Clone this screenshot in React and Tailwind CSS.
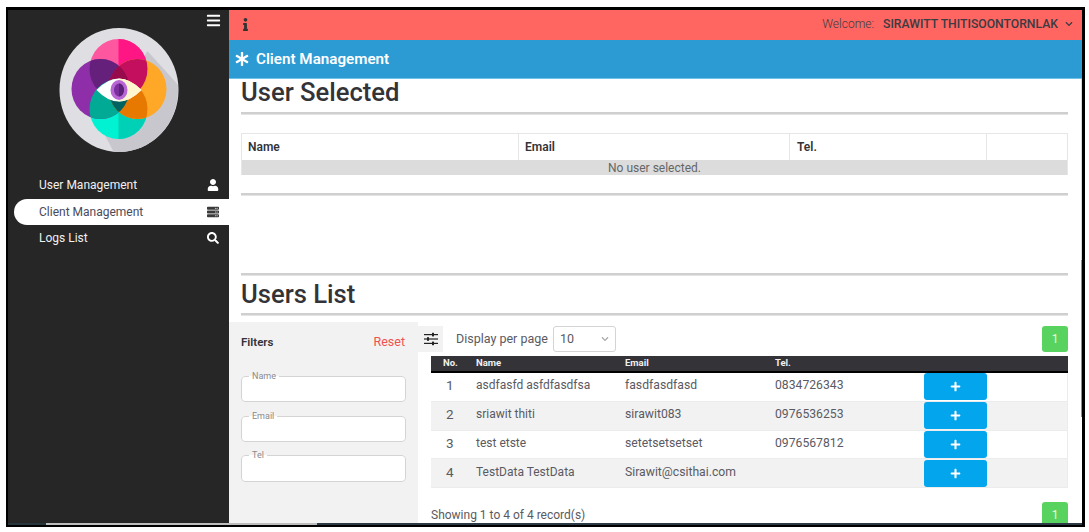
import { FaAsterisk, FaBars, FaChevronDown, FaInfo, FaPlus, FaSearch, FaServer, FaUser } from "react-icons/fa";

const users = [
  { id: 1, name: "asdfasfd asfdfasdfsa", email: "fasdfasdfasd", tel: "0834726343" },
  { id: 2, name: "sriawit thiti", email: "sirawit083", tel: "0976536253" },
  { id: 3, name: "test etste", email: "setetsetsetset", tel: "0976567812" },
  { id: 4, name: "TestData TestData", email: "Sirawit@csithai.com", tel: "" },
];

function Logo() {
  return (
    <svg width="120" height="126" viewBox="58.5 26 120 126" className="block">
      <defs>
        <clipPath id="pink"><ellipse cx="118" cy="68" rx="29" ry="30" /></clipPath>
        <clipPath id="teal"><ellipse cx="118" cy="108" rx="29" ry="30" /></clipPath>
        <clipPath id="purple"><ellipse cx="100" cy="88" rx="29" ry="30" /></clipPath>
        <clipPath id="orange"><ellipse cx="137" cy="88" rx="29" ry="30" /></clipPath>
        <clipPath id="disc"><ellipse cx="118.5" cy="89" rx="59" ry="62" /></clipPath>
        <clipPath id="pinkRight"><rect x="118" y="30" width="40" height="80" /></clipPath>
        <clipPath id="tealRight"><rect x="118" y="70" width="40" height="80" /></clipPath>
        <clipPath id="eye"><path d="M96 89 Q118 66 141 89 Q118 112 96 89Z" /></clipPath>
      </defs>
      <ellipse cx="118.5" cy="89" rx="59.5" ry="62" fill="#dfdfe3" />
      <path d="M147 50 L185 92 L185 160 L118 160 L100 126 Z" fill="#c9c7ce" clipPath="url(#disc)" />
      <ellipse cx="118" cy="68" rx="29" ry="30" fill="#ff579f" />
      <ellipse cx="118" cy="68" rx="29" ry="30" fill="#ff1583" clipPath="url(#pinkRight)" />
      <ellipse cx="118" cy="108" rx="29" ry="30" fill="#00f2d3" />
      <ellipse cx="118" cy="108" rx="29" ry="30" fill="#00d0b6" clipPath="url(#tealRight)" />
      <ellipse cx="100" cy="88" rx="29" ry="30" fill="#8e2ea8" />
      <ellipse cx="137" cy="88" rx="29" ry="30" fill="#ffa726" />
      <g clipPath="url(#pink)">
        <ellipse cx="100" cy="88" rx="29" ry="30" fill="#65207c" />
        <ellipse cx="137" cy="88" rx="29" ry="30" fill="#c40e5e" />
        <g clipPath="url(#purple)"><ellipse cx="137" cy="88" rx="29" ry="30" fill="#970a4c" /></g>
      </g>
      <g clipPath="url(#teal)">
        <ellipse cx="100" cy="88" rx="29" ry="30" fill="#00aa94" />
        <ellipse cx="137" cy="88" rx="29" ry="30" fill="#e87900" />
        <g clipPath="url(#purple)"><ellipse cx="137" cy="88" rx="29" ry="30" fill="#00635f" /></g>
      </g>
      <path d="M96 89 Q118 66 141 89 Q118 112 96 89Z" fill="#ffffff" />
      <rect x="118" y="70" width="25" height="40" fill="#fff5cf" clipPath="url(#eye)" />
      <ellipse cx="118.5" cy="89" rx="8.5" ry="10" fill="#b766d3" />
      <ellipse cx="118.5" cy="89" rx="5" ry="6.5" fill="#7b2f9e" />
      <path d="M118.5 82.5 A5 6.5 0 0 1 118.5 95.5Z" fill="#5b2278" />
    </svg>
  );
}

function SlidersIcon() {
  return (
    <svg width="14" height="14" viewBox="0 0 14 14" fill="#222">
      <rect x="0" y="2" width="14" height="1.2" />
      <rect x="8" y="0.8" width="2" height="3.6" />
      <rect x="0" y="6.4" width="14" height="1.2" />
      <rect x="3" y="5.2" width="2" height="3.6" />
      <rect x="0" y="10.8" width="14" height="1.2" />
      <rect x="8" y="9.6" width="2" height="3.6" />
    </svg>
  );
}

function NavItem({ label, icon, active }) {
  return (
    <div
      className={`flex h-[26.5px] items-center justify-between pl-[25px] pr-[10px] ml-[6px] text-[12px] rounded-l-full ${
        active ? "bg-white text-[#4a4a5a]" : "text-[#f0f0f0]"
      }`}
    >
      <span>{label}</span>
      {icon}
    </div>
  );
}

function FilterField({ label }) {
  return (
    <fieldset className="mb-[9.3px] h-[30.5px] rounded-[4px] border border-[#d4d4d4] bg-white px-[7px]">
      <legend className="px-[3px] text-[9px] leading-[9px] text-[#8a8a8a]">{label}</legend>
    </fieldset>
  );
}

function Rule() {
  return <div className="h-[3px] border-b border-[#e4e4e4] bg-[#cfcfcf]" />;
}

function PageButton() {
  return (
    <div className="flex h-[26px] w-[26px] items-center justify-center rounded-[3px] bg-[#59d35f] text-[12px] text-[#f4f4d8]">
      1
    </div>
  );
}

export default function App() {
  return (
    <div className="h-[532px] w-[1089px] overflow-hidden bg-white pl-[6px] pt-[7px] font-['Roboto',sans-serif]">
      <div className="relative flex h-[520px] w-[1079px] overflow-hidden border-b-2 border-l-2 border-r-[3px] border-t-[3px] border-black">
        <aside className="w-[221px] shrink-0 bg-[#262626]">
          <div className="flex h-[16px] items-start justify-end pr-[8px] pt-[3px] text-white">
            <FaBars size={15} />
          </div>
          <div className="ml-[50.5px] mt-[1px]">
            <Logo />
          </div>
          <nav className="mt-[19px]">
            <NavItem label="User Management" icon={<FaUser size={12} className="text-white" />} />
            <NavItem label="Client Management" active icon={<FaServer size={12} className="text-[#3a3a3a]" />} />
            <NavItem label="Logs List" icon={<FaSearch size={12} className="text-white" />} />
          </nav>
        </aside>

        <main className="min-w-0 flex-1">
          <header className="flex h-[30px] items-center justify-between bg-[#ff6661] pb-[2px] pl-[10px] pr-[9px]">
            <FaInfo size={13} className="text-[#333]" />
            <div className="flex items-center text-[12px] text-[#3b3b42]">
              <span className="mr-[9px] font-light">Welcome:</span>
              <span className="text-[12.2px] font-medium">SIRAWITT THITISOONTORNLAK</span>
              <FaChevronDown size={8} className="ml-[7px]" />
            </div>
          </header>
          <div className="flex h-[39px] items-center gap-[7px] border-b border-[#6fc1ea] bg-[#2c9ad3] pl-[6px] text-[15.2px] font-semibold text-white">
            <FaAsterisk size={14} />
            <span>Client Management</span>
          </div>

          <section className="pl-[12px] pr-[14px]">
            <h1 className="mb-[7px] text-[25.6px] font-medium leading-[26px] text-[#333338]">User Selected</h1>
            <Rule />
            <div className="mt-[18px] border border-b-0 border-[#e6e6e6] text-[12px]">
              <div className="grid h-[26px] grid-cols-[276px_271px_197px_1fr] items-center font-semibold text-[#333338]">
                <div className="flex h-full items-center pl-[6px]">Name</div>
                <div className="flex h-full items-center border-l border-[#e6e6e6] pl-[6px]">Email</div>
                <div className="flex h-full items-center border-l border-[#e6e6e6] pl-[7px]">Tel.</div>
                <div className="h-full border-l border-[#e6e6e6]" />
              </div>
              <div className="flex h-[15px] items-center justify-center bg-[#dcdcdc] text-[#666]">No user selected.</div>
            </div>
            <div className="mt-[18px]">
              <Rule />
            </div>
            <div className="mt-[77px]">
              <Rule />
            </div>
            <h1 className="mb-[5px] mt-[4px] text-[25.6px] font-medium leading-[28px] text-[#333338]">Users List</h1>
            <Rule />
          </section>

          <div className="mt-[6px] flex">
            <aside className="h-[204px] w-[189px] shrink-0 bg-[#f2f2f2] pl-[12px] pr-[12px] pt-[11px]">
              <div className="mb-[20px] flex items-center justify-between pr-[1px]">
                <span className="text-[11.5px] font-semibold text-[#333338]">Filters</span>
                <span className="text-[12.5px] text-[#f0524f]">Reset</span>
              </div>
              <FilterField label="Name" />
              <FilterField label="Email" />
              <FilterField label="Tel" />
            </aside>

            <div className="min-w-0 flex-1 pr-[14px]">
              <div className="mt-[4px] flex h-[26px] items-center">
                <div className="flex h-full w-[25px] items-center justify-center bg-[#f2f2f2]">
                  <SlidersIcon />
                </div>
                <span className="ml-[13px] text-[12.5px] text-[#5a5a62]">Display per page</span>
                <div className="ml-[5px] flex h-full w-[63px] items-center justify-between rounded-[3px] border border-[#d4d4d4] pl-[6px] pr-[6px] text-[12.5px] text-[#5a5a62]">
                  10
                  <FaChevronDown size={8} className="text-[#aaa]" />
                </div>
                <div className="ml-auto">
                  <PageButton />
                </div>
              </div>

              <div className="ml-[13px] mt-[4px]">
                <div className="grid h-[17px] grid-cols-[45px_149px_150px_149px_1fr] items-center border-b-[2px] border-black bg-[#333338] text-[9.5px] font-bold text-[#f0f0f0]">
                  <span className="pl-[12px]">No.</span>
                  <span>Name</span>
                  <span>Email</span>
                  <span>Tel.</span>
                  <span />
                </div>
                {users.map((user, i) => (
                  <div
                    key={user.id}
                    className={`grid h-[28.8px] grid-cols-[45px_149px_150px_149px_1fr] items-center border-b border-r border-[#ececec] text-[12.2px] text-[#5a5a62] ${
                      i % 2 === 1 ? "bg-[#f2f2f2]" : "bg-white"
                    }`}
                  >
                    <span className="pb-[3px] pl-[15px] text-[13.5px]">{user.id}</span>
                    <span className="pb-[3px] text-[12px]">{user.name}</span>
                    <span className="pb-[3px]">{user.email}</span>
                    <span className="pb-[3px]">{user.tel}</span>
                    <div className="flex h-[27px] w-[63px] items-center justify-center rounded-[3px] bg-[#03a5ec] text-white">
                      <FaPlus size={11} />
                    </div>
                  </div>
                ))}
              </div>

              <div className="ml-[13px] mt-[14px] flex items-start justify-between">
                <span className="pt-[4px] text-[12px] text-[#5a5a62]">Showing 1 to 4 of 4 record(s)</span>
                <PageButton />
              </div>
            </div>
          </div>
        </main>
        {/* window scrollbars caught in the screenshot */}
        <div className="absolute bottom-0 left-0 h-[2px] w-[38px] bg-[#26343c]" />
        <div className="absolute bottom-0 left-[38px] h-[2px] w-[271px] bg-[#bdbdbd]" />
        <div className="absolute bottom-0 left-[309px] right-0 h-[2px] bg-[#2c3a46]" />
        <div className="absolute right-0 top-[69px] h-[181px] w-[1px] bg-[#d8d8d8]" />
        <div className="absolute right-0 top-[250px] h-[157px] w-[1px] bg-[#8f8f8f]" />
      </div>
    </div>
  );
}
